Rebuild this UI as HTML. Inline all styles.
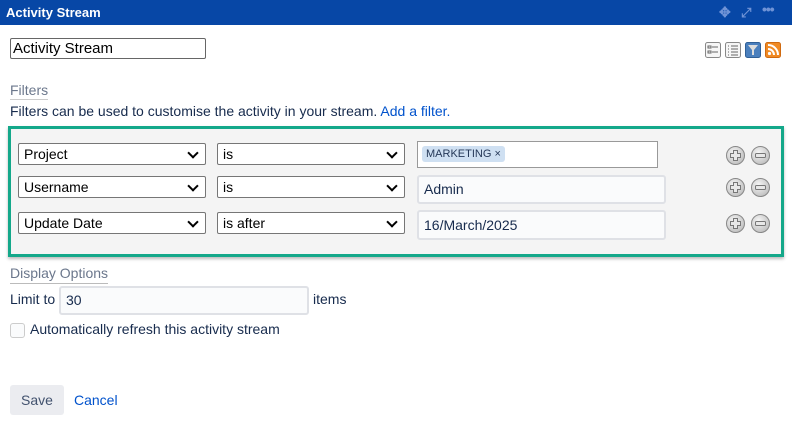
<!DOCTYPE html>
<html><head><style>
body{margin:0;width:792px;height:423px;background:#fff;font-family:"Liberation Sans",Arial,sans-serif;color:#172b4d;position:relative;overflow:hidden}
.a{position:absolute}
.hdr{left:0;top:0;width:792px;height:25px;background:#0747a6;color:#fff;font-weight:bold;font-size:13px;line-height:25px}
.sel{position:absolute;border:1px solid #767676;border-radius:2px;background:#fff;font-size:14px;line-height:20px;padding-left:5px;box-sizing:border-box;height:22px;color:#000}
.sel:after{content:"";position:absolute;right:8px;top:5px;width:6px;height:6px;border-right:2px solid #000;border-bottom:2px solid #000;transform:rotate(45deg)}
.inp{position:absolute;background:#fafbfc;border:2px solid #dfe1e6;border-radius:3px;box-sizing:border-box;font-size:14px;padding-left:5px;color:#172b4d}
.btn{position:absolute;width:19px;height:19px}
.ic{position:absolute;top:42px;width:15px;height:15px;border:1px solid #888;border-radius:2px;box-sizing:border-box;background:#f6f6f6}
</style></head><body>
<svg width="0" height="0" style="position:absolute"><defs>
<radialGradient id="g" cx="40%" cy="35%" r="70%"><stop offset="0" stop-color="#f6f6f6"/><stop offset="1" stop-color="#bdbdbd"/></radialGradient>
<g id="p"><circle cx="9.5" cy="9.5" r="9" fill="url(#g)" stroke="#888"/><path d="M7.5 4.5h4v3h3v4h-3v3h-4v-3h-3v-4h3z" fill="#e8e8e8" stroke="#777"/></g>
<g id="m"><circle cx="9.5" cy="9.5" r="9" fill="url(#g)" stroke="#888"/><rect x="4.5" y="7.5" width="10" height="4" rx="1" fill="#e8e8e8" stroke="#777"/></g>
</defs></svg>
<div class="a hdr"><span style="margin-left:6px">Activity Stream</span>
<span style="position:absolute;left:719px;top:0;color:#6f93d6;font-size:14px">✥</span>
<span style="position:absolute;left:741px;top:0;color:#6f93d6;font-size:13px">⤢</span>
<span style="position:absolute;left:762px;top:-3px;color:#6f93d6;font-size:14px;letter-spacing:-1px">•••</span></div>
<div class="a" style="left:10px;top:38px;width:196px;height:21px;border:1px solid #666;border-radius:2px;box-sizing:border-box;font-size:15px;line-height:19px;padding-left:2px;color:#000">Activity Stream</div>
<svg class="a" style="left:705px;top:42px" width="78" height="16">
<rect x="0.5" y="0.5" width="15" height="15" rx="2" fill="#f6f6f6" stroke="#888"/>
<path d="M3 4h3v2H3zM3 9h3v2H3zM7 5h6M7 10h6" stroke="#666" fill="none"/>
<rect x="20.5" y="0.5" width="15" height="15" rx="2" fill="#f6f6f6" stroke="#888"/>
<path d="M23 4h1M23 7h1M23 10h1M23 13h1M26 4h7M26 7h7M26 10h7M26 13h7" stroke="#666"/>
<rect x="40.5" y="0.5" width="15" height="15" rx="2" fill="#4a7fbd" stroke="#2f5f96"/>
<path d="M43 3h10l-4 5v5h-2V8z" fill="#ddd"/>
<rect x="60.5" y="0.5" width="15" height="15" rx="2" fill="#f08a24" stroke="#d06a10"/>
<circle cx="64.5" cy="11.5" r="1.6" fill="#fff"/><path d="M63 7a6 6 0 0 1 6 6M63 3a10 10 0 0 1 10 10" stroke="#fff" stroke-width="2" fill="none"/>
</svg>
<div class="a" style="left:10px;top:82px;font-size:14px;color:#6b778c">Filters</div>
<div class="a" style="left:10px;top:99px;width:38px;border-top:1px solid #ccc"></div>
<div class="a" style="left:10px;top:103px;font-size:14px">Filters can be used to customise the activity in your stream. <span style="color:#0052cc">Add a filter.</span></div>
<div class="a" style="left:8px;top:126px;width:776px;height:131px;border:3px solid #14a88a;box-sizing:border-box;background:#f4f4f4;box-shadow:0 2px 3px #bbb"></div>
<div class="sel" style="left:18px;top:143px;width:188px">Project</div>
<div class="sel" style="left:217px;top:143px;width:188px">is</div>
<div class="sel" style="left:18px;top:176px;width:188px">Username</div>
<div class="sel" style="left:217px;top:176px;width:188px">is</div>
<div class="sel" style="left:18px;top:212px;width:188px">Update Date</div>
<div class="sel" style="left:217px;top:212px;width:188px">is after</div>
<div class="a" style="left:417px;top:141px;width:241px;height:27px;border:1px solid #999;background:#fff;box-sizing:border-box"><span style="position:absolute;left:4px;top:4px;height:16px;background:#cfe0f2;border-radius:3px;font-size:11px;line-height:16px;padding:0 4px;color:#253858">MARKETING ×</span></div>
<div class="inp" style="left:417px;top:175px;width:249px;height:29px;line-height:25px">Admin</div>
<div class="inp" style="left:417px;top:210px;width:249px;height:30px;line-height:26px">16/March/2025</div>
<svg class="btn" style="left:726px;top:146px"><use href="#p"/></svg><svg class="btn" style="left:751px;top:146px"><use href="#m"/></svg>
<svg class="btn" style="left:726px;top:178px"><use href="#p"/></svg><svg class="btn" style="left:751px;top:178px"><use href="#m"/></svg>
<svg class="btn" style="left:726px;top:214px"><use href="#p"/></svg><svg class="btn" style="left:751px;top:214px"><use href="#m"/></svg>
<div class="a" style="left:10px;top:265px;font-size:14px;color:#6b778c">Display Options</div>
<div class="a" style="left:10px;top:283px;width:98px;border-top:1px solid #bbb"></div>
<div class="a" style="left:10px;top:291px;font-size:14px">Limit to</div>
<div class="inp" style="left:59px;top:286px;width:250px;height:29px;line-height:25px">30</div>
<div class="a" style="left:313px;top:291px;font-size:14px">items</div>
<div class="a" style="left:10px;top:323px;width:13px;height:13px;border:1px solid #ccc;border-radius:3px;background:#fafbfc"></div>
<div class="a" style="left:30px;top:321px;font-size:14px">Automatically refresh this activity stream</div>
<div class="a" style="left:10px;top:385px;width:54px;height:30px;background:#ebecf0;border-radius:3px;font-size:14px;line-height:30px;text-align:center;color:#42526e">Save</div>
<div class="a" style="left:74px;top:392px;font-size:14px;color:#0052cc">Cancel</div>
</body></html>
